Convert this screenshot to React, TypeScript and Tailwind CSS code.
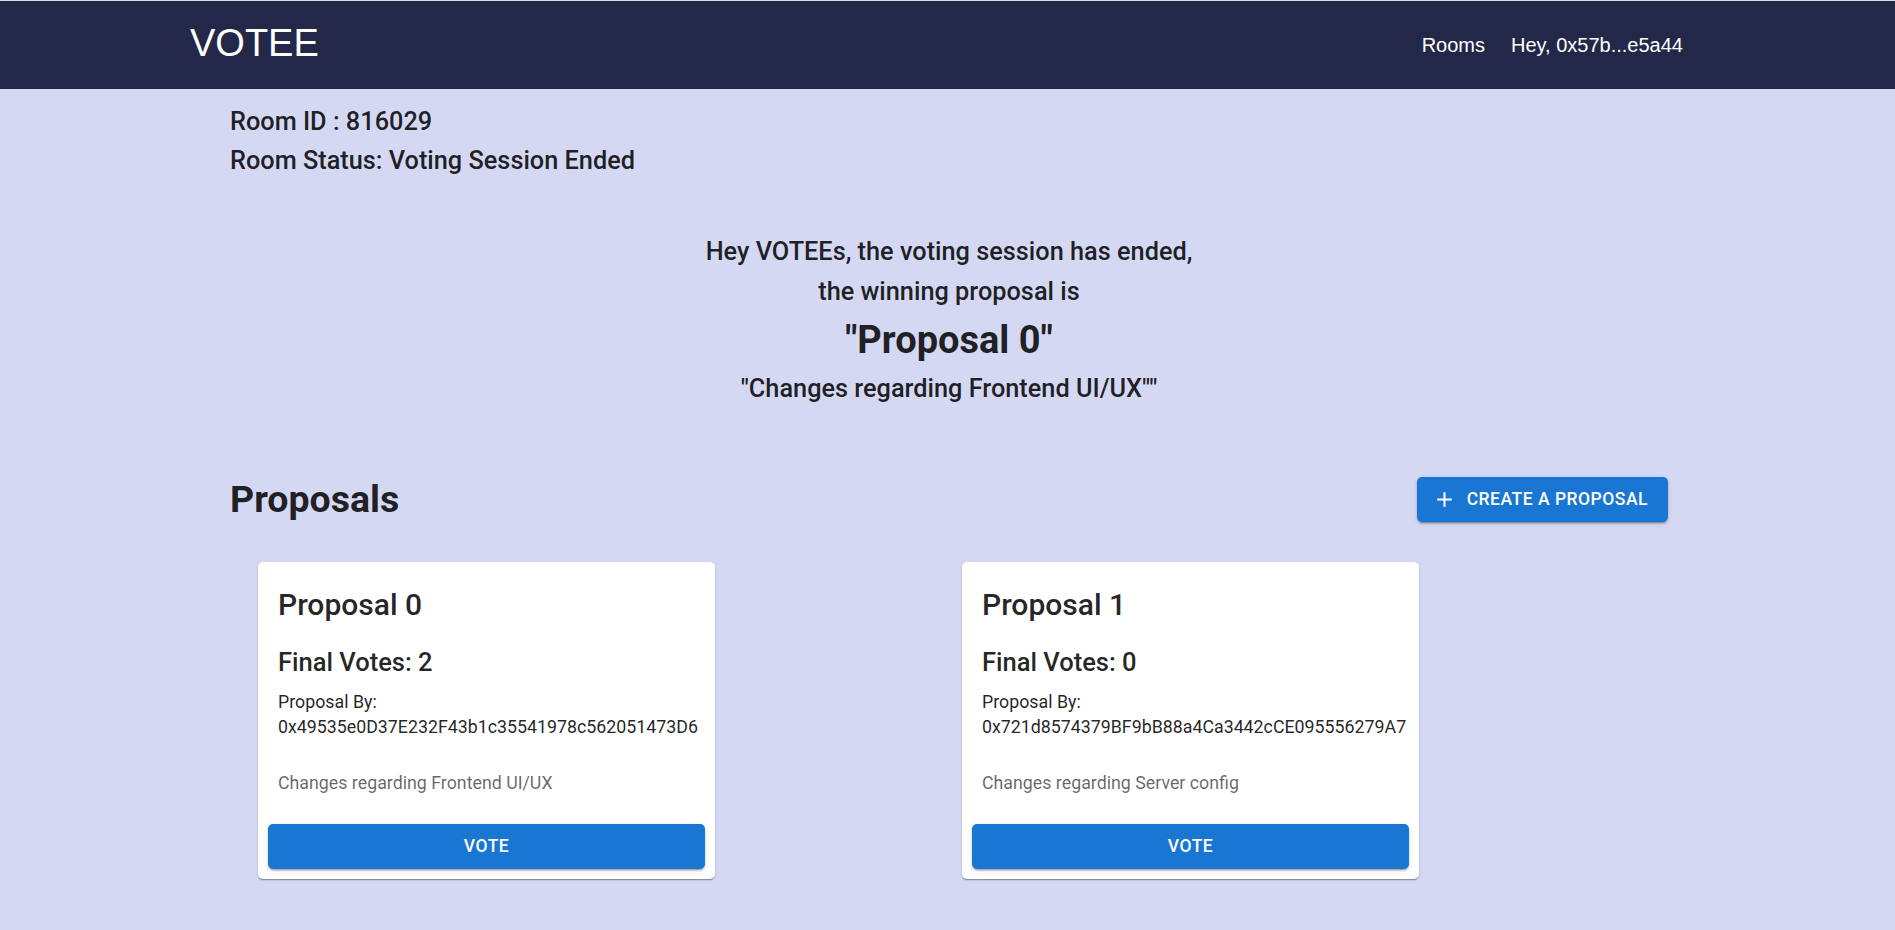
import React from 'react';

interface Proposal {
  name: string;
  votes: number;
  by: string;
  desc: string;
}

const proposals: Proposal[] = [
  {
    name: 'Proposal 0',
    votes: 2,
    by: '0x49535e0D37E232F43b1c35541978c562051473D6',
    desc: 'Changes regarding Frontend UI/UX',
  },
  {
    name: 'Proposal 1',
    votes: 0,
    by: '0x721d8574379BF9bB88a4Ca3442cCE095556279A7',
    desc: 'Changes regarding Server config',
  },
];

const ProposalCard: React.FunctionComponent<{ proposal: Proposal }> = ({
  proposal,
}) => {
  return (
    <div className="w-[457px] bg-white rounded-[5px] shadow-[0px_2px_1px_-1px_rgba(0,0,0,0.2),0px_1px_1px_0px_rgba(0,0,0,0.14),0px_1px_3px_0px_rgba(0,0,0,0.12)] flex flex-col">
      <div className="px-5 pt-[23px]">
        <div className="text-[30px] leading-[40px] font-medium">{proposal.name}</div>
        <div className="mt-[17px] text-[25.5px] leading-[40px] font-medium">
          Final Votes: {proposal.votes}
        </div>
        <div className="mt-[7px] text-[17.8px] leading-[25px]">
          <div>Proposal By:</div>
          <div>{proposal.by}</div>
        </div>
        <div className="mt-[31px] text-[17.8px] leading-[25px] text-[rgba(0,0,0,0.6)]">
          {proposal.desc}
        </div>
      </div>
      <div className="px-[10px] pt-[29px] pb-[10px]">
        <button className="w-full h-[45px] rounded-[5px] bg-[#1976d2] text-white text-[17.5px] font-medium uppercase tracking-[0.02857em] shadow-[0px_3px_1px_-2px_rgba(0,0,0,0.2),0px_2px_2px_0px_rgba(0,0,0,0.14),0px_1px_5px_0px_rgba(0,0,0,0.12)]">
          Vote
        </button>
      </div>
    </div>
  );
};

export default function App() {
  return (
    <div className="min-h-[930px] bg-[#d4d8f2] font-['Roboto',sans-serif] text-[rgba(0,0,0,0.87)]">
      <header className="h-[89px] border-t border-[#dcdcdc] bg-[#232849] text-white font-['Liberation_Sans',Arial,sans-serif] flex items-center justify-between pl-[190px] pr-[212px]">
        <div className="text-[38px] leading-[42px] mb-[5px]">VOTEE</div>
        <nav className="flex items-center gap-[26px] text-[20px] leading-[24px]">
          <span>Rooms</span>
          <span>Hey, 0x57b...e5a44</span>
        </nav>
      </header>

      <main className="mx-auto w-[1441px] pl-[3px] pt-[13px]">
        <div className="text-[25.3px] leading-[39px] font-medium">
          <div>Room ID : 816029</div>
          <div>Room Status: Voting Session Ended</div>
        </div>

        <div className="mt-[52px] flex flex-col items-center text-center font-medium">
          <div className="text-[25.3px] leading-[40px]">
            Hey VOTEEs, the voting session has ended,
          </div>
          <div className="text-[25.3px] leading-[40px]">
            the winning proposal is
          </div>
          <div className="mt-1 text-[38px] leading-[48px] font-bold">
            "Proposal 0"
          </div>
          <div className="mt-[5px] text-[25.3px] leading-[40px]">
            "Changes regarding Frontend UI/UX""
          </div>
        </div>

        <div className="mt-[68px] h-[45px] flex items-center justify-between">
          <h2 className="text-[37.5px] leading-[45px] font-bold">Proposals</h2>
          <button className="h-[45px] pl-[15px] pr-5 flex items-center rounded-[5px] bg-[#1976d2] text-white text-[17.5px] font-medium uppercase tracking-[0.02857em] shadow-[0px_3px_1px_-2px_rgba(0,0,0,0.2),0px_2px_2px_0px_rgba(0,0,0,0.14),0px_1px_5px_0px_rgba(0,0,0,0.12)]">
            <svg viewBox="0 0 24 24" className="w-[25px] h-[25px] mr-[10px]" fill="currentColor">
              <path d="M19 13h-6v6h-2v-6H5v-2h6V5h2v6h6v2z" />
            </svg>
            Create a proposal
          </button>
        </div>

        <div className="mt-10 pl-[28px] flex gap-[247px]">
          {proposals.map((p) => (
            <ProposalCard key={p.name} proposal={p} />
          ))}
        </div>
      </main>
    </div>
  );
}
